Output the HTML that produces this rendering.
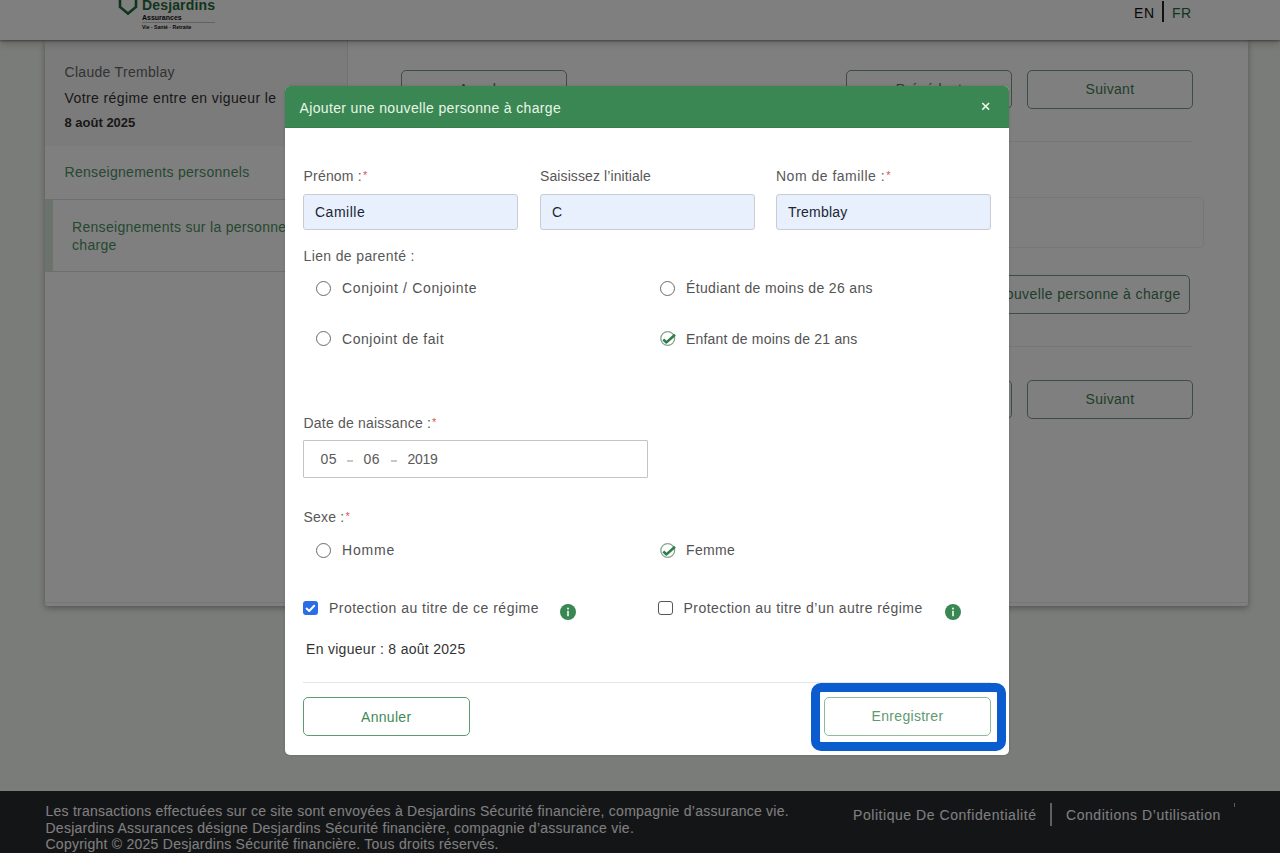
<!DOCTYPE html>
<html><head><meta charset="utf-8">
<style>
*{box-sizing:border-box;margin:0;padding:0}
html,body{width:1280px;height:853px;overflow:hidden}
body{-webkit-font-smoothing:antialiased;position:relative;background:#f5f8f3;font-family:"Liberation Sans",sans-serif;font-size:14px;color:#333}
.a{position:absolute;white-space:nowrap;line-height:16px}
#hdr{position:absolute;left:0;top:0;width:1280px;height:40px;background:#fff;box-shadow:0 1px 2px rgba(0,0,0,.4),0 3px 8px rgba(0,0,0,.22);z-index:2}
#card{position:absolute;left:45px;top:40px;width:1203px;height:566px;background:#fff;border-radius:3px;box-shadow:0 2px 6px rgba(0,0,0,.32)}
.btn{position:absolute;height:39px;border:1.5px solid #7a9a84;border-radius:5px;color:#3f7d55;text-align:center;line-height:36px;letter-spacing:.3px}
#footer{position:absolute;left:0;top:791px;width:1280px;height:62px;background:#292b2f;color:#d5d5d5}
#ov{position:absolute;left:0;top:0;width:1280px;height:853px;background:rgba(0,0,0,.5);z-index:5}
#modal{position:absolute;left:285px;top:86px;width:724px;height:669px;background:#fff;border-radius:5px;z-index:6;overflow:hidden;box-shadow:0 0 3px rgba(0,0,0,.15)}
#mh{position:absolute;left:0;top:0;width:724px;height:42px;background:#3b8753;border-bottom:1.5px solid #357f4b}
.lbl{position:absolute;white-space:nowrap;line-height:16px;color:#585858;letter-spacing:.2px}
.req{color:#d9505a;font-size:11px;position:relative;top:-2px;margin-left:1px}
.inp{position:absolute;top:108px;width:215px;height:36px;background:#e8f0fe;border:1px solid #c9ccd2;border-radius:3px}
.inp span{position:absolute;left:11px;top:9px;line-height:16px;color:#202631;letter-spacing:.2px}
.rad{position:absolute;width:15px;height:15px;border:1.3px solid #6a6a6a;border-radius:50%}
.rt{position:absolute;white-space:nowrap;line-height:16px;color:#535353;letter-spacing:.35px}
</style></head><body>

<div id="hdr">
  <svg style="position:absolute;left:116px;top:-8px" width="24" height="24" viewBox="0 0 24 24"><path d="M4 2 L4 15 L12 21.5 L20 15 L20 2" fill="none" stroke="#1f6b3c" stroke-width="2.6"/></svg>
  <div class="a" style="left:142px;top:-3px;font-size:14px;font-weight:bold;color:#1f6b3c;line-height:16px;letter-spacing:.15px">Desjardins</div>
  <div class="a" style="left:142px;top:14px;font-size:7px;font-weight:bold;color:#111;line-height:8px">Assurances</div>
  <div style="position:absolute;left:142px;top:22px;width:73px;height:1px;background:#c4c4c4"></div>
  <div class="a" style="left:142px;top:24.5px;font-size:5.1px;font-weight:bold;color:#111;line-height:5px">Vie · Santé · Retraite</div>
  <div class="a" style="left:1134px;top:5px;color:#111;letter-spacing:.6px">EN</div>
  <div style="position:absolute;left:1162px;top:1px;width:1.5px;height:21px;background:#222"></div>
  <div class="a" style="left:1172px;top:5px;color:#1f6b3c;letter-spacing:.5px">FR</div>
</div>

<div id="card">
  <div style="position:absolute;left:0;top:0;width:302px;height:106px;background:#f6f6f6"></div>
  <div style="position:absolute;left:302px;top:0;width:1px;height:566px;background:#e2e2e2"></div>
  <div style="position:absolute;left:0;top:159px;width:302px;height:1px;background:#dcdcdc"></div>
  <div style="position:absolute;left:0;top:231px;width:302px;height:1px;background:#dcdcdc"></div>
  <div style="position:absolute;left:0;top:160px;width:8px;height:71px;background:#d8e6db"></div>
  <div class="a" style="left:19.5px;top:24px;color:#666;letter-spacing:.3px">Claude Tremblay</div>
  <div class="a" style="left:19.5px;top:50px;color:#333;letter-spacing:.4px">Votre régime entre en vigueur le</div>
  <div class="a" style="left:19.5px;top:74.5px;color:#333;font-size:13px;font-weight:bold">8 août 2025</div>
  <div class="a" style="left:19.5px;top:124px;color:#4b9163;letter-spacing:.3px">Renseignements personnels</div>
  <div class="a" style="left:27px;top:179px;color:#4b9163;letter-spacing:.3px;line-height:17.5px">Renseignements sur la personne à<br>charge</div>

  <div class="btn" style="left:356px;top:29.5px;width:166px">Annuler</div>
  <div class="btn" style="left:801px;top:29.5px;width:166px">Précédent</div>
  <div class="btn" style="left:982px;top:29.5px;width:166px">Suivant</div>
  <div style="position:absolute;left:356px;top:100.5px;width:792px;height:1px;background:#ebebeb"></div>
  <div style="position:absolute;left:356px;top:157px;width:803px;height:51px;border:1px solid #efefef;border-radius:4px"></div>
  <div class="btn" style="left:863px;top:234.5px;width:282px;letter-spacing:.4px">Ajouter une nouvelle personne à charge</div>
  <div style="position:absolute;left:356px;top:306px;width:792px;height:1px;background:#ebebeb"></div>
  <div style="position:absolute;left:0;top:562px;width:1203px;height:1px;background:#ededed"></div>
  <div class="btn" style="left:356px;top:339.5px;width:166px">Annuler</div>
  <div class="btn" style="left:801px;top:339.5px;width:166px">Précédent</div>
  <div class="btn" style="left:982px;top:339.5px;width:166px">Suivant</div>
</div>

<div id="footer">
  <div class="a" style="left:45.5px;top:12px;font-size:14px;line-height:16.5px;letter-spacing:.25px;color:#fff">Les transactions effectuées sur ce site sont envoyées à Desjardins Sécurité financière, compagnie d’assurance vie.<br>Desjardins Assurances désigne Desjardins Sécurité financière, compagnie d’assurance vie.<br>Copyright © 2025 Desjardins Sécurité financière. Tous droits réservés.</div>
  <div class="a" style="left:853px;top:16px;color:#fff;letter-spacing:.55px">Politique De Confidentialité</div>
  <div style="position:absolute;left:1050px;top:12px;width:1.5px;height:23px;background:#c0c0c0"></div>
  <div class="a" style="left:1066px;top:16px;color:#fff;letter-spacing:.55px">Conditions D’utilisation</div>
  <div style="position:absolute;left:1233.5px;top:12px;width:1px;height:4px;background:#bbb"></div>
</div>

<div id="ov"></div>

<div id="modal">
  <div id="mh">
    <div class="a" style="left:14.5px;top:13.6px;color:#e8f6e8;letter-spacing:.35px">Ajouter une nouvelle personne à charge</div>
    <svg style="position:absolute;left:694px;top:14px" width="14" height="14" viewBox="0 0 14 14"><path d="M3.3 3 L10.1 9.6 M10.1 3 L3.3 9.6" stroke="#e6f7e6" stroke-width="1.6"/></svg>
  </div>
  <div class="lbl" style="left:18.5px;top:82px">Prénom :<span class="req">*</span></div>
  <div class="lbl" style="left:255px;top:82px;letter-spacing:.1px">Saisissez l’initiale</div>
  <div class="lbl" style="left:491px;top:82px;letter-spacing:.5px">Nom de famille :<span class="req">*</span></div>
  <div class="inp" style="left:18px"><span style="letter-spacing:.5px">Camille</span></div>
  <div class="inp" style="left:255px"><span>C</span></div>
  <div class="inp" style="left:491px"><span>Tremblay</span></div>

  <div class="lbl" style="left:18.5px;top:161.5px;letter-spacing:.37px">Lien de parenté :</div>
  <div class="rad" style="left:30.8px;top:195px"></div>
  <div class="rt" style="left:57px;top:194px;letter-spacing:.65px">Conjoint / Conjointe</div>
  <div class="rad" style="left:375px;top:195px"></div>
  <div class="rt" style="left:401px;top:194px">Étudiant de moins de 26 ans</div>
  <div class="rad" style="left:30.8px;top:245px"></div>
  <div class="rt" style="left:57px;top:245px;letter-spacing:.55px">Conjoint de fait</div>
  <svg style="position:absolute;left:374px;top:244px" width="18" height="17" viewBox="0 0 18 17"><circle cx="8.7" cy="8.5" r="6.9" fill="none" stroke="#86a38e" stroke-width="1.3"/><path d="M4.3 9.6 L7.5 12.4 L16 4.8" fill="none" stroke="#2f7d4c" stroke-width="2.6" stroke-linejoin="round"/></svg>
  <div class="rt" style="left:401px;top:245px;letter-spacing:.2px">Enfant de moins de 21 ans</div>

  <div class="lbl" style="left:18.5px;top:328.5px">Date de naissance :<span class="req">*</span></div>
  <div style="position:absolute;left:18px;top:354px;width:344.5px;height:37.5px;border:1px solid #c4c4c4;border-radius:1px"></div>
  <div class="a" style="left:35.5px;top:364.7px;color:#5a5a5a;letter-spacing:.5px">05</div>
  <div style="position:absolute;left:62px;top:374px;width:6px;height:1.6px;background:#c8c8c8"></div>
  <div class="a" style="left:78.5px;top:364.7px;color:#5a5a5a;letter-spacing:.5px">06</div>
  <div style="position:absolute;left:106px;top:374px;width:6px;height:1.6px;background:#c8c8c8"></div>
  <div class="a" style="left:122.5px;top:364.7px;color:#5a5a5a;letter-spacing:-.3px">2019</div>

  <div class="lbl" style="left:18.5px;top:423px">Sexe :<span class="req">*</span></div>
  <div class="rad" style="left:30.8px;top:456.5px"></div>
  <div class="rt" style="left:57px;top:456px;letter-spacing:.85px">Homme</div>
  <svg style="position:absolute;left:374px;top:455.5px" width="18" height="17" viewBox="0 0 18 17"><circle cx="8.7" cy="8.5" r="6.9" fill="none" stroke="#86a38e" stroke-width="1.3"/><path d="M4.3 9.6 L7.5 12.4 L16 4.8" fill="none" stroke="#2f7d4c" stroke-width="2.6" stroke-linejoin="round"/></svg>
  <div class="rt" style="left:401px;top:456px">Femme</div>

  <div style="position:absolute;left:18px;top:514.5px;width:14.5px;height:14.5px;background:#2b6de6;border-radius:3px"></div>
  <svg style="position:absolute;left:18px;top:514.5px" width="15" height="15" viewBox="0 0 15 15"><path d="M3.6 7.6 L6.2 10 L11.2 4.8" fill="none" stroke="#fff" stroke-width="2" stroke-linecap="round" stroke-linejoin="round"/></svg>
  <div class="rt" style="left:44px;top:513.5px;letter-spacing:.48px">Protection au titre de ce régime</div>
  <svg style="position:absolute;left:275px;top:518px" width="16" height="16" viewBox="0 0 16 16"><circle cx="8" cy="8" r="8" fill="#3a8753"/><rect x="7.1" y="6.8" width="1.8" height="5.4" fill="#dff0e3"/><circle cx="8" cy="4.6" r="1.05" fill="#dff0e3"/></svg>
  <div style="position:absolute;left:373px;top:514.5px;width:14.5px;height:14.5px;border:1.3px solid #555;border-radius:3px"></div>
  <div class="rt" style="left:398.5px;top:513.5px;letter-spacing:.45px">Protection au titre d’un autre régime</div>
  <svg style="position:absolute;left:659.5px;top:518px" width="16" height="16" viewBox="0 0 16 16"><circle cx="8" cy="8" r="8" fill="#3a8753"/><rect x="7.1" y="6.8" width="1.8" height="5.4" fill="#dff0e3"/><circle cx="8" cy="4.6" r="1.05" fill="#dff0e3"/></svg>

  <div class="rt" style="left:21px;top:555px;color:#333;letter-spacing:.29px">En vigueur : 8 août 2025</div>
  <div style="position:absolute;left:18px;top:596px;width:688px;height:1px;background:#e6e6e6"></div>
  <div class="btn" style="left:18px;top:611px;padding-top:1px;width:166.5px;border-color:#5e9c70;border-width:1.3px;color:#3f8a57">Annuler</div>
  <div class="btn" style="left:539px;top:611px;width:167px;border-color:#8fbb9a;border-width:1px;color:#5e9a6e">Enregistrer</div>
  <div style="position:absolute;left:525.6px;top:597px;width:195.2px;height:67.6px;border:9px solid #0a5ccf;border-radius:10px"></div>
</div>

</body></html>
